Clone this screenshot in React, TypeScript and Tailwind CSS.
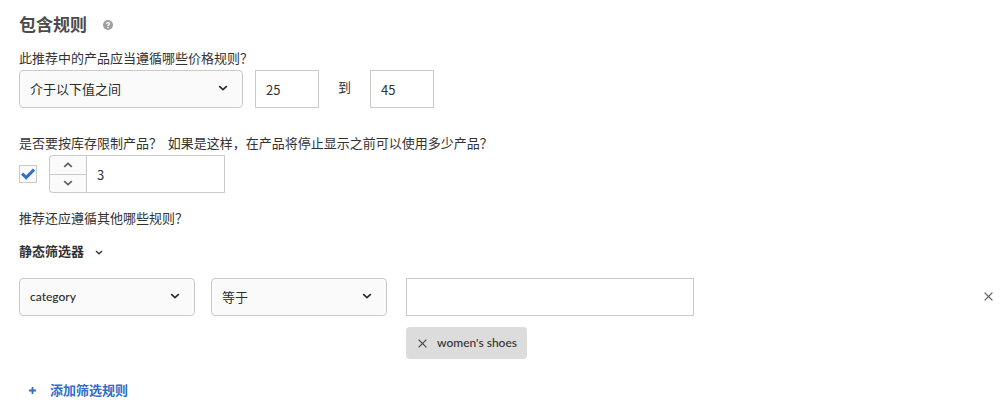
import { useState } from "react";
import type { ReactNode } from "react";

function Chevron({ className, up = false }: { className: string; up?: boolean }) {
  return (
    <svg className={className} viewBox="0 0 10 6" fill="none" stroke="currentColor" strokeWidth="1.7" aria-hidden="true">
      <path d={up ? "M1.2 4.8 5 1.4 8.8 4.8" : "M1.2 1.2 5 4.6 8.8 1.2"} />
    </svg>
  );
}

function Cross({ className }: { className: string }) {
  return (
    <svg className={className} viewBox="0 0 9 9" fill="none" stroke="currentColor" strokeWidth="1.3" aria-hidden="true">
      <path d="M0.6 0.6 8.4 8.4M8.4 0.6 0.6 8.4" />
    </svg>
  );
}

function Picker({ label, options, size, id }: { label: string; options: string[]; size: string; id?: string }) {
  return (
    <div className={`relative ${size}`}>
      <select
        id={id}
        aria-label={label}
        className="h-[38px] w-full appearance-none rounded border border-[#cacaca] bg-[#fafafa] pr-8 pl-2.5 text-[#2c2c2c]"
      >
        {options.map((o) => (
          <option key={o}>{o}</option>
        ))}
      </select>
      <Chevron className="pointer-events-none absolute top-[15px] right-[15px] h-1.5 w-2.5 text-[#2c2c2c]" />
    </div>
  );
}

function Question({ children, htmlFor }: { children: ReactNode; htmlFor: string }) {
  return (
    <label htmlFor={htmlFor} className="mb-0.5 block leading-5">
      {children}
    </label>
  );
}

const latin = "font-['Lato','Noto_Sans_CJK_SC',sans-serif] font-medium text-[12px]";
const box = "h-[38px] border border-[#cacaca] bg-white px-2.5 text-[13px] text-[#323232]";

export default function App() {
  const [low, setLow] = useState("25");
  const [high, setHigh] = useState("45");
  const [stock, setStock] = useState(3);
  const [limited, setLimited] = useState(true);
  const [value, setValue] = useState("");

  return (
    <main className="bg-white pt-3 pr-[13px] pb-2 pl-[19px] font-['Noto_Sans_CJK_SC',sans-serif] text-[13px] text-[#323232]" lang="zh-CN">
      <header className="mb-3 flex items-center gap-4">
        <h2 className="text-[17px] leading-6 font-bold text-[#4b4b4b]">包含规则</h2>
        <button type="button" aria-label="帮助" className="text-[#a0a0a0]">
          <svg className="mt-0.5 size-2.5" viewBox="0 0 10 10" aria-hidden="true">
            <circle cx="5" cy="5" r="5" fill="currentColor" />
            <path d="M3.5 3.9C3.5 2.1 6.5 2.1 6.5 3.8 6.5 4.8 5 4.8 5 6" fill="none" stroke="#fff" strokeWidth="1.2" />
            <circle cx="5" cy="7.6" r="0.75" fill="#fff" />
          </svg>
        </button>
      </header>

      <section className="mb-[25px]">
        <Question htmlFor="price-rule">此推荐中的产品应当遵循哪些价格规则？</Question>
        <div className="flex items-center">
          <Picker id="price-rule" label="价格规则" size="w-56" options={["介于以下值之间", "小于", "大于"]} />
          <input aria-label="最低价格" value={low} onChange={(e) => setLow(e.target.value)} className={`${box} ml-3 w-16`} />
          <span className="mx-[19px] pb-1">到</span>
          <input aria-label="最高价格" value={high} onChange={(e) => setHigh(e.target.value)} className={`${box} w-16`} />
        </div>
      </section>

      <section className="mb-[15px]">
        <Question htmlFor="stock-limit">是否要按库存限制产品？&nbsp; 如果是这样，在产品将停止显示之前可以使用多少产品？</Question>
        <div className="flex items-center gap-3">
          <div className="grid size-[18px] place-items-center">
            <input
              id="stock-limit"
              type="checkbox"
              checked={limited}
              onChange={(e) => setLimited(e.target.checked)}
              className="col-start-1 row-start-1 size-[18px] appearance-none border border-[#cacaca] bg-[#fafafa]"
            />
            {limited && (
              <svg className="pointer-events-none col-start-1 row-start-1 size-3.5 text-[#326ec8]" viewBox="0 0 14 14" fill="none" stroke="currentColor" strokeWidth="3" aria-hidden="true">
                <path d="M1.1 6.6 5.2 10.6 13 2.6" />
              </svg>
            )}
          </div>
          <div className="flex">
            <div className="flex h-[38px] w-[37px] flex-col divide-y divide-[#cacaca] overflow-hidden rounded-l border border-r-0 border-[#cacaca] bg-[#fafafa] text-[#5f5f5f]">
              <button type="button" aria-label="增加" onClick={() => setStock(stock + 1)} className="flex flex-1 items-center justify-center">
                <Chevron up className="h-1.5 w-2.5" />
              </button>
              <button type="button" aria-label="减少" onClick={() => setStock(Math.max(0, stock - 1))} className="flex flex-1 items-center justify-center">
                <Chevron className="h-1.5 w-2.5" />
              </button>
            </div>
            <input aria-label="库存数量" value={stock} onChange={(e) => setStock(Number(e.target.value) || 0)} className={`${box} w-[139px]`} />
          </div>
        </div>
      </section>

      <section>
        <p className="mb-[13px] leading-5">推荐还应遵循其他哪些规则？</p>
        <button type="button" className="mb-[17px] flex items-center gap-[11px] leading-5 font-bold">
          静态筛选器
          <Chevron className="mt-0.5 h-[5px] w-2" />
        </button>

        <div className="flex items-start">
          <Picker label="属性" size={`mr-4 w-44 ${latin}`} options={["category", "brand"]} />
          <Picker label="运算符" size="mr-[19px] w-44" options={["等于", "不等于"]} />
          <div className="w-72">
            <input aria-label="值" value={value} onChange={(e) => setValue(e.target.value)} className={`${box} w-full`} />
            <div className={`mt-[11px] inline-flex h-8 items-center gap-2.5 rounded bg-[#dcdcdc] pr-2.5 pl-3 ${latin}`}>
              <button type="button" aria-label="移除 women's shoes" className="text-[#4b4b4b]">
                <Cross className="size-[9px]" />
              </button>
              women's shoes
            </div>
          </div>
          <button type="button" aria-label="删除规则" className="ml-auto flex h-9 items-center text-[#5f5f5f]">
            <Cross className="size-[9px]" />
          </button>
        </div>

        <button type="button" className="mt-[21px] ml-2.5 flex items-center gap-3.5 leading-5 font-bold text-[#326ec8]">
          <svg className="size-[7px]" viewBox="0 0 7 7" stroke="currentColor" strokeWidth="1.8" aria-hidden="true">
            <path d="M3.5 0V7M0 3.5H7" />
          </svg>
          添加筛选规则
        </button>
      </section>
    </main>
  );
}
